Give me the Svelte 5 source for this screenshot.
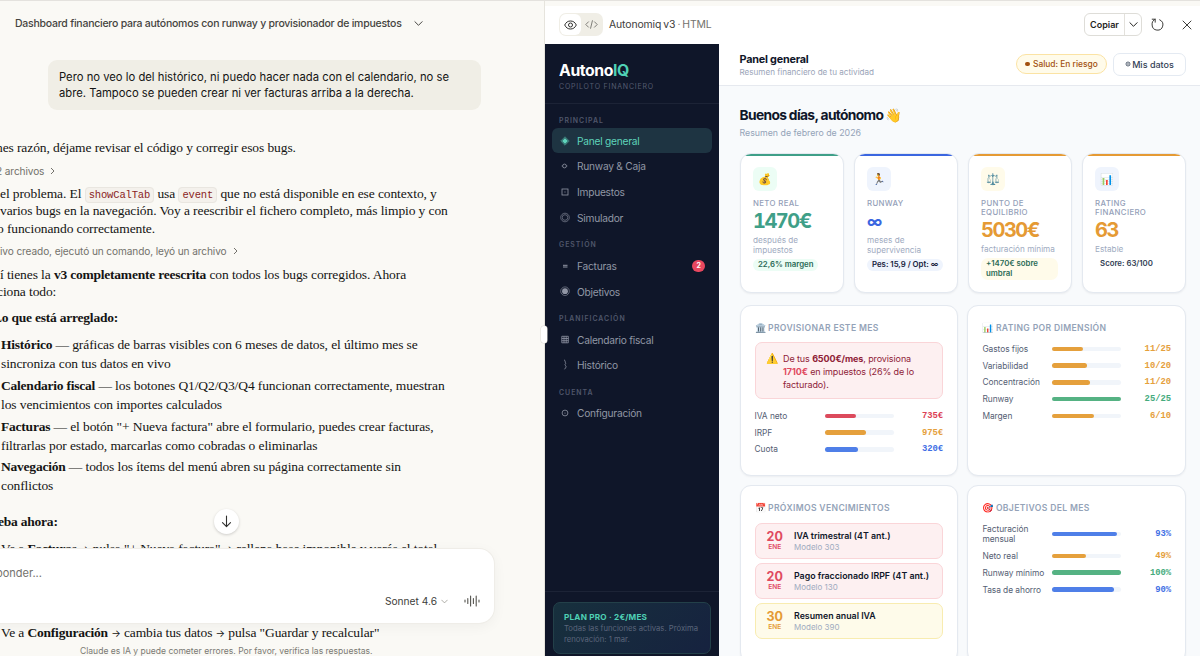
<script lang="ts">
	interface Meter {
		label: string;
		pct: number;
		value: string;
		tone: string;
	}

	const sections = [
		{
			title: 'Principal',
			items: [
				{ id: 'panel', label: 'Panel general' },
				{ id: 'runway', label: 'Runway & Caja' },
				{ id: 'impuestos', label: 'Impuestos' },
				{ id: 'simulador', label: 'Simulador' }
			]
		},
		{
			title: 'Gestión',
			items: [
				{ id: 'facturas', label: 'Facturas', badge: 2 },
				{ id: 'objetivos', label: 'Objetivos' }
			]
		},
		{
			title: 'Planificación',
			items: [
				{ id: 'calendario', label: 'Calendario fiscal' },
				{ id: 'historico', label: 'Histórico' }
			]
		},
		{ title: 'Cuenta', items: [{ id: 'config', label: 'Configuración' }] }
	];

	const kpis = [
		{ icon: '💰', label: 'Neto real', value: '1470€', sub: 'después de impuestos', pill: '22,6% margen', tone: 'green' },
		{ icon: '🏃', label: 'Runway', value: '∞', sub: 'meses de supervivencia', pill: 'Pes: 15,9 / Opt: ∞', tone: 'blue' },
		{ icon: '⚖️', label: 'Punto de equilibrio', value: '5030€', sub: 'facturación mínima', pill: '+1470€ sobre umbral', tone: 'amber' },
		{ icon: '📊', label: 'Rating financiero', value: '63', sub: 'Estable', pill: 'Score: 63/100', tone: 'rating' }
	];

	const provision: Meter[] = [
		{ label: 'IVA neto', pct: 45, value: '735€', tone: 'red' },
		{ label: 'IRPF', pct: 60, value: '975€', tone: 'amber' },
		{ label: 'Cuota', pct: 49, value: '320€', tone: 'blue' }
	];

	const rating: Meter[] = [
		{ label: 'Gastos fijos', pct: 44, value: '11/25', tone: 'amber' },
		{ label: 'Variabilidad', pct: 50, value: '10/20', tone: 'amber' },
		{ label: 'Concentración', pct: 55, value: '11/20', tone: 'amber' },
		{ label: 'Runway', pct: 100, value: '25/25', tone: 'green' },
		{ label: 'Margen', pct: 60, value: '6/10', tone: 'amber' }
	];

	const goals: Meter[] = [
		{ label: 'Facturación mensual', pct: 93, value: '93%', tone: 'blue' },
		{ label: 'Neto real', pct: 49, value: '49%', tone: 'amber' },
		{ label: 'Runway mínimo', pct: 100, value: '100%', tone: 'green' },
		{ label: 'Tasa de ahorro', pct: 90, value: '90%', tone: 'blue' }
	];

	const dues = [
		{ day: 20, month: 'ENE', name: 'IVA trimestral (4T ant.)', model: 'Modelo 303', tone: 'red' },
		{ day: 20, month: 'ENE', name: 'Pago fraccionado IRPF (4T ant.)', model: 'Modelo 130', tone: 'red' },
		{ day: 30, month: 'ENE', name: 'Resumen anual IVA', model: 'Modelo 390', tone: 'amber' }
	];

	let active = $state('panel');
</script>

{#snippet meters(rows: Meter[])}
	{#each rows as row}
		<div class="meter">
			<span class="meter-label">{row.label}</span>
			<div class="track"><div class="fill {row.tone}" style="width: {row.pct}%"></div></div>
			<span class="meter-value {row.tone}">{row.value}</span>
		</div>
	{/each}
{/snippet}

{#snippet chevron(size: number)}
	<svg width={size} height={size} viewBox="0 0 10 10" fill="none" stroke="currentColor" stroke-width="1.1" stroke-linecap="round" stroke-linejoin="round"><path d="M1 3l4 4 4-4" /></svg>
{/snippet}

<div class="app">
	<section class="chat">
		<header class="chat-title">
			<span>Dashboard financiero para autónomos con runway y provisionador de impuestos</span>
			{@render chevron(9)}
		</header>

		<div class="bubble">Pero no veo lo del histórico, ni puedo hacer nada con el calendario, no se<br />abre. Tampoco se pueden crear ni ver facturas arriba a la derecha.</div>

		<div class="answer">
			<p class="a1">nes razón, déjame revisar el código y corregir esos bugs.</p>
			<p class="step s1">2 archivos <svg width="5" height="8" viewBox="0 0 5 8" fill="none" stroke="currentColor"><path d="M1 1l3 3-3 3" /></svg></p>
			<p class="a2">el problema. El <code>showCalTab</code> usa <code>event</code> que no está disponible en ese contexto, y<br />varios bugs en la navegación. Voy a reescribir el fichero completo, más limpio y con<br /><span class="cut">o funcionando correctamente.</span></p>
			<p class="step s2">ivo creado, ejecutó un comando, leyó un archivo <svg width="5" height="8" viewBox="0 0 5 8" fill="none" stroke="currentColor"><path d="M1 1l3 3-3 3" /></svg></p>
			<p class="a3">í tienes la <b>v3 completamente reescrita</b> con todos los bugs corregidos. Ahora<br /><span class="cut">ciona todo:</span></p>
			<p class="a4"><b>Lo que está arreglado:</b></p>
			<ul>
				<li><b>Histórico</b> — gráficas de barras visibles con 6 meses de datos, el último mes se<br />sincroniza con tus datos en vivo</li>
				<li><b>Calendario fiscal</b> — los botones Q1/Q2/Q3/Q4 funcionan correctamente, muestran<br />los vencimientos con importes calculados</li>
				<li><b>Facturas</b> — el botón "+ Nueva factura" abre el formulario, puedes crear facturas,<br />filtrarlas por estado, marcarlas como cobradas o eliminarlas</li>
				<li><b>Navegación</b> — todos los ítems del menú abren su página correctamente sin<br />conflictos</li>
			</ul>
			<p class="a5"><b>eba ahora:</b></p>
			<ul class="try">
				<li>Ve a <b>Facturas</b> <span class="arrow">→</span> pulsa "+ Nueva factura" <span class="arrow">→</span> rellena base imponible y verás el total</li>
				<li>Ve a <b>Configuración</b> <span class="arrow">→</span> cambia tus datos <span class="arrow">→</span> pulsa "Guardar y recalcular"</li>
			</ul>
		</div>

		<button class="scroll-down" aria-label="Bajar">
			<svg width="11" height="13" viewBox="0 0 11 13" fill="none" stroke="currentColor" stroke-width="1.1" stroke-linecap="round" stroke-linejoin="round"><path d="M5.5 1v10.5M1.5 7.7l4 4 4-4" /></svg>
		</button>

		<div class="composer">
			<span class="placeholder">ponder...</span>
			<div class="composer-bar">
				<span class="model">Sonnet 4.6</span>
				<span class="model-caret">{@render chevron(7)}</span>
				<svg class="voice" width="16" height="12" viewBox="0 0 16 12" stroke="currentColor" stroke-width="1.1" stroke-linecap="round"><path d="M1 5v2M3.8 3.5v5M6.6 1v10M9.4 3.5v5M12.2 1v10M15 5v2" /></svg>
			</div>
		</div>
		<p class="disclaimer">Claude es IA y puede cometer errores. Por favor, verifica las respuestas.</p>
		<div class="handle"></div>
	</section>

	<section class="artifact">
		<header class="tools">
			<div class="toggle">
				<span class="on"><svg width="13" height="10" viewBox="0 0 13 10" fill="none" stroke="currentColor"><path d="M.7 5C2 2.2 4 1 6.5 1S11 2.2 12.3 5C11 7.8 9 9 6.5 9S2 7.8.7 5z" /><circle cx="6.5" cy="5" r="2" /></svg></span>
				<span><svg width="13" height="9" viewBox="0 0 13 9" fill="none" stroke="currentColor" stroke-width=".9" stroke-linecap="round" stroke-linejoin="round"><path d="M3.5 1.8L.8 4.5l2.7 2.7M9.5 1.8l2.7 2.7-2.7 2.7M7.4.7L5.6 8.3" /></svg></span>
			</div>
			<span class="file">Autonomiq v3 <i>·</i> <em>HTML</em></span>
			<div class="copy"><span>Copiar</span><span class="caret">{@render chevron(9)}</span></div>
			<svg class="reload" width="13" height="13" viewBox="0 0 13 13" fill="none" stroke="currentColor" stroke-linecap="round" stroke-linejoin="round"><path d="M1.2 1.2h3v3M4.200 1.200C1.800 2.200.8 4.500 1.100 7a5.400 5.400 0 1 0 7.600-5.200" /></svg>
			<svg width="10" height="10" viewBox="0 0 10 10" stroke="currentColor" stroke-linecap="round"><path d="M1 1l8 8M9 1L1 9" /></svg>
		</header>

		<div class="dash">
			<aside>
				<div class="brand">
					<div class="logo">Autono<span>IQ</span></div>
					<div class="tagline">Copiloto financiero</div>
				</div>
				<nav>
					{#each sections as section}
						<div class="nav-title">{section.title}</div>
						{#each section.items as item}
							<button class="nav-item" class:active={active === item.id} onclick={() => (active = item.id)}>
								<svg width="12" height="12" viewBox="0 0 12 12" fill="none" stroke="currentColor" stroke-width=".8">
									{#if item.id === 'panel'}
										<path d="M6 1.8L10.2 6 6 10.2 1.8 6z" stroke-width=".5" /><path d="M6 3L9 6 6 9 3 6z" fill="currentColor" stroke="none" />
									{:else if item.id === 'runway'}
										<circle cx="5.5" cy="6" r="1.9" /><path d="M2.7 6h.9M7.4 6h.9" />
									{:else if item.id === 'impuestos'}
										<rect x="3" y="3" width="6" height="6" /><path d="M5.4 6h1.2" />
									{:else if item.id === 'simulador'}
										<circle cx="6" cy="5.5" r="4.3" stroke-width=".6" /><circle cx="6" cy="5.5" r="2.8" stroke-width=".6" />
									{:else if item.id === 'facturas'}
										<path d="M4 5.3h4.5M4 7h4.5" stroke-width="1" />
									{:else if item.id === 'objetivos'}
										<circle cx="6" cy="5.2" r="4.3" stroke-width=".6" /><circle cx="6" cy="5.2" r="2.9" fill="currentColor" stroke="none" />
									{:else if item.id === 'calendario'}
										<path d="M2.8 2.3h6.5v6.5H2.8zM5 2.3v6.5M7.2 2.3v6.5M2.8 4.5h6.5M2.8 6.7h6.5" />
									{:else if item.id === 'historico'}
										<path d="M5 .8c2 1 .6 2 1.500 3s-1.300 1.500-.2 2.500 1.200 1.500-.8 4" />
									{:else}
										<circle cx="6" cy="6" r="2.9" /><circle cx="6" cy="6" r=".6" fill="currentColor" stroke="none" />
									{/if}
								</svg>
								<span>{item.label}</span>
								{#if item.badge}<b class="badge">{item.badge}</b>{/if}
							</button>
						{/each}
					{/each}
				</nav>
				<div class="aside-foot">
					<div class="plan">
						<strong>PLAN PRO · 2€/MES</strong>
						<p>Todas las funciones activas. Próxima<br />renovación: 1 mar.</p>
					</div>
				</div>
			</aside>

			<main>
				<div class="topbar">
					<div class="crumb">
						<h2>Panel general</h2>
						<p>Resumen financiero de tu actividad</p>
					</div>
					<span class="health"><i></i>Salud: En riesgo</span>
					<button class="data"><svg width="6" height="6" viewBox="0 0 6 6" fill="none" stroke="currentColor" stroke-width=".8"><circle cx="3" cy="3" r="2" /><circle cx="3" cy="3" r=".4" /></svg>Mis datos</button>
				</div>

				<div class="content">
					<h1>Buenos días, autónomo <span class="wave">👋</span></h1>
					<p class="date">Resumen de febrero de 2026</p>

					<div class="kpis">
						{#each kpis as kpi}
							<article class="kpi {kpi.tone}">
								<div class="kpi-icon">{kpi.icon}</div>
								<div class="kpi-label">{kpi.label}</div>
								<div class="kpi-value" class:symbol={kpi.value === '∞'}>{kpi.value}</div>
								<div class="kpi-sub">{kpi.sub}</div>
								<div class="kpi-pill">{kpi.pill}</div>
							</article>
						{/each}
					</div>

					<div class="grid">
						<article class="panel">
							<h3><span>🏛️</span>Provisionar este mes</h3>
							<div class="alert">
								<span class="warn">⚠️</span>
								<p>De tus <b>6500€/mes</b>, provisiona<br /><b class="amount">1710€</b> en impuestos (26% de lo<br />facturado).</p>
							</div>
							{@render meters(provision)}
						</article>
						<article class="panel">
							<h3><span>📊</span>Rating por dimensión</h3>
							{@render meters(rating)}
						</article>
						<article class="panel">
							<h3><span>📅</span>Próximos vencimientos</h3>
							<div class="dues">
								{#each dues as due}
									<div class="due {due.tone}">
										<div class="when"><b>{due.day}</b><span>{due.month}</span></div>
										<div class="what"><b>{due.name}</b><span>{due.model}</span></div>
									</div>
								{/each}
							</div>
						</article>
						<article class="panel">
							<h3><span>🎯</span>Objetivos del mes</h3>
							{@render meters(goals)}
						</article>
					</div>
				</div>
			</main>
		</div>
	</section>
</div>

<style>
	:global(body) {
		background: #faf9f5;
	}

	.app {
		box-sizing: border-box;
		display: flex;
		width: 1200px;
		height: 656px;
		overflow: hidden;
		background: #faf9f5;
		border-top: 1px solid #e4e2de;
		font-family: Inter, 'Liberation Sans', sans-serif;
	}

	.app :global(*) {
		box-sizing: border-box;
	}

	p, h1, h2, h3, ul {
		margin: 0;
		padding: 0;
	}

	button {
		border: 0;
		padding: 0;
		background: none;
		font: inherit;
	}

	svg {
		flex: none;
	}

	/* chat */
	.chat {
		position: relative;
		width: 545px;
		flex: none;
		border-right: 1px solid #e6e4dd;
		white-space: nowrap;
	}

	.chat-title {
		display: flex;
		align-items: center;
		gap: 12px;
		height: 44px;
		padding-left: 15px;
		font-size: 10.5px;
		font-weight: 500;
		letter-spacing: -0.24px;
		color: #454440;
	}

	.bubble {
		width: 433px;
		height: 50px;
		margin: 15px 0 0 48px;
		padding: 9px 11px;
		border-radius: 9px;
		background: #f0eee6;
		font-size: 11.25px;
		line-height: 16.3px;
		color: #141413;
	}

	.answer {
		padding-top: 29px;
		font-family: 'Liberation Serif', serif;
		font-size: 13.5px;
		line-height: 17.6px;
		letter-spacing: -0.1px;
		color: #141413;
	}

	.answer b {
		letter-spacing: -0.22px;
	}

	.a1 {
		margin-left: -4px;
	}

	.step {
		display: flex;
		align-items: center;
		gap: 6px;
		margin-top: 7px;
		font-family: Inter, sans-serif;
		font-size: 10.1px;
		line-height: 14px;
		color: #73726c;
	}

	.s1 {
		margin-left: -4px;
	}

	.s2 {
		margin-top: 6.5px;
	}

	.a2 {
		margin-top: 7px;
	}

	.cut {
		margin-left: -3px;
	}

	code {
		padding: 1px 3px;
		border: 1px solid #e9e6e0;
		border-radius: 4px;
		background: #f4f1ec;
		font-family: 'Liberation Mono', monospace;
		font-size: 10.5px;
		line-height: 0;
		letter-spacing: -0.15px;
		color: #8a2424;
	}

	.a3 {
		margin-top: 8px;
	}

	.a4 {
		margin: 8.3px 0 0 -7px;
	}

	.answer ul {
		margin-top: 9.2px;
		list-style: none;
		line-height: 18.8px;
	}

	.answer li {
		padding-left: 1px;
		margin-bottom: 3.2px;
	}

	.a5 {
		margin: 17.4px 0 0 -2px;
	}

	.answer .try {
		margin-top: 8.8px;
	}

	.try li:first-child {
		margin-bottom: 65.4px;
	}

	.arrow {
		font-family: Inter, sans-serif;
		font-size: 10px;
		line-height: 0;
	}

	.scroll-down {
		position: absolute;
		left: 214px;
		top: 508px;
		display: grid;
		place-items: center;
		width: 25px;
		height: 25px;
		border-radius: 50%;
		background: #fff;
		box-shadow: 0 1px 3px rgba(0, 0, 0, 0.18);
		color: #30302e;
	}

	.composer {
		position: absolute;
		left: -40px;
		top: 548px;
		width: 534px;
		height: 74px;
		padding: 17px 14px 0 36px;
		border-radius: 15px;
		background: #fff;
		box-shadow: 0 0 0 1px #efede8, 0 3px 14px rgba(0, 0, 0, 0.05);
	}

	.placeholder {
		display: block;
		font-size: 11px;
		line-height: 14px;
		color: #73726c;
	}

	.composer-bar {
		display: flex;
		align-items: center;
		justify-content: flex-end;
		height: 14px;
		margin-top: 14px;
		font-size: 10.2px;
		color: #3d3d3a;
	}

	.model-caret {
		display: flex;
		margin: 0 16px 0 4px;
		color: #97958d;
	}

	.voice {
		color: #55544f;
	}

	.disclaimer {
		position: absolute;
		left: 80px;
		top: 644px;
		font-size: 8.55px;
		line-height: 13px;
		color: #7b7a74;
	}

	.handle {
		position: absolute;
		z-index: 2;
		right: -3px;
		top: 325px;
		width: 6px;
		height: 17px;
		border-radius: 3px;
		background: #fff;
		box-shadow: 0 0 0 0.5px #dddbd5;
	}

	/* artifact header */
	.artifact {
		display: flex;
		flex-direction: column;
		width: 655px;
		padding-top: 5px;
	}

	.tools {
		display: flex;
		align-items: center;
		height: 37.5px;
		padding: 0 8px 0 14px;
		background: #fff;
		color: #3d3d3a;
	}

	.toggle {
		display: flex;
		height: 23px;
		width: 44px;
		padding: 1px;
		border-radius: 7px;
		background: #f0eee6;
		color: #73726c;
	}

	.toggle span {
		display: grid;
		place-items: center;
		width: 21px;
		border-radius: 6px;
	}

	.toggle .on {
		background: #fff;
		color: #30302e;
	}

	.file {
		margin: 0 auto 0 6px;
		font-size: 10.4px;
		letter-spacing: -0.1px;
		word-spacing: -0.8px;
	}

	.file i,
	.file em {
		font-style: normal;
		color: #73726c;
	}

	.copy {
		display: flex;
		align-items: center;
		width: 58px;
		height: 23px;
		margin-right: 9px;
		border: 1px solid #deddd8;
		border-radius: 6px;
		font-size: 9px;
		font-weight: 600;
		color: #1f1e1d;
	}

	.copy span:first-child {
		flex: 1;
		text-align: center;
	}

	.caret {
		display: grid;
		place-items: center;
		width: 17px;
		height: 100%;
		border-left: 1px solid #e3e1dc;
	}

	.reload {
		margin-right: 18px;
	}

	/* sidebar */
	.dash {
		display: flex;
		flex: 1;
		min-height: 0;
		font-family: Inter, sans-serif;
	}

	aside {
		display: flex;
		flex-direction: column;
		width: 174px;
		flex: none;
		background: #0f1629;
	}

	.brand {
		height: 60.5px;
		padding: 17px 14px 0;
		border-bottom: 1px solid #1c2336;
	}

	.logo {
		font-size: 15.8px;
		font-weight: 700;
		line-height: 20px;
		letter-spacing: -0.4px;
		color: #fff;
	}

	.logo span {
		color: #4fd1b5;
	}

	.tagline {
		margin-top: 1px;
		font-size: 7px;
		line-height: 10px;
		letter-spacing: 0.8px;
		text-transform: uppercase;
		color: #555c70;
	}

	nav {
		flex: 1;
		padding: 11px 7px 0;
	}

	.nav-title {
		height: 13px;
		padding-left: 7px;
		font-size: 6.9px;
		font-weight: 600;
		line-height: 11px;
		letter-spacing: 1px;
		text-transform: uppercase;
		color: #50576b;
	}

	.nav-item + .nav-title {
		height: 14px;
		margin-top: 9px;
	}

	.nav-item {
		display: flex;
		align-items: center;
		gap: 6px;
		width: 160px;
		height: 25px;
		margin-bottom: 0.8px;
		padding: 0 7px;
		border-radius: 6px;
		font-size: 10.2px;
		letter-spacing: -0.25px;
		color: #9196a5;
	}

	.nav-item.active {
		background: #1e3442;
		color: #5fd4bb;
	}

	.badge {
		width: 13px;
		margin-left: auto;
		border-radius: 7px;
		background: #e8475f;
		font-size: 7px;
		line-height: 12px;
		text-align: center;
		color: #fff;
	}

	.aside-foot {
		height: 65px;
		padding: 10px 8px 0;
		border-top: 1px solid #1c2336;
	}

	.plan {
		height: 52px;
		padding: 8.5px 10px;
		border: 1px solid #234049;
		border-radius: 7px;
		background: linear-gradient(135deg, #17303d, #16223f);
		white-space: nowrap;
	}

	.plan strong {
		display: block;
		font-size: 8.2px;
		line-height: 11px;
		letter-spacing: 0.2px;
		color: #4fd1b5;
	}

	.plan p {
		font-size: 7.7px;
		line-height: 11px;
		color: #5b657b;
	}

	/* dashboard */
	main {
		flex: 1;
		min-width: 0;
		background: #f8fafc;
		overflow: hidden;
		white-space: nowrap;
	}

	.topbar {
		display: flex;
		align-items: center;
		height: 42px;
		padding: 0 14px 0 20.5px;
		border-bottom: 1px solid #e6e9ef;
		background: #fff;
	}

	.crumb {
		flex: 1;
		padding-top: 2px;
	}

	h2 {
		font-size: 10.8px;
		line-height: 13px;
		letter-spacing: -0.2px;
		color: #0f1629;
	}

	.crumb p {
		font-size: 8.1px;
		line-height: 12px;
		color: #9aa4b8;
	}

	.health {
		display: flex;
		align-items: center;
		width: 91px;
		height: 20px;
		margin-right: 6px;
		padding-left: 8px;
		border: 1px solid #fbe3a4;
		border-radius: 10px;
		background: #fffbea;
		font-size: 8.4px;
		font-weight: 500;
		color: #a2500f;
	}

	.health i {
		width: 4.5px;
		height: 4.5px;
		margin-right: 3.5px;
		border-radius: 50%;
		background: currentColor;
	}

	.data {
		display: flex;
		align-items: center;
		justify-content: center;
		gap: 1px;
		width: 73px;
		height: 23px;
		border: 1px solid #e4eaf2;
		border-radius: 7px;
		font-size: 9px;
		font-weight: 500;
		color: #334155;
	}

	.content {
		padding: 20px 14px 0 20.5px;
	}

	h1 {
		display: flex;
		align-items: center;
		gap: 2px;
		font-size: 13.8px;
		line-height: 19px;
		letter-spacing: -0.66px;
		color: #0f1629;
	}

	.wave {
		font-size: 13.5px;
	}

	.date {
		margin-top: 2px;
		font-size: 8.8px;
		line-height: 12px;
		color: #94a3b8;
	}

	.kpis {
		display: grid;
		grid-template-columns: repeat(4, 1fr);
		gap: 9.6px;
		margin-top: 14px;
	}

	.kpi {
		position: relative;
		height: 140px;
		padding: 13.5px 12.5px 0;
		border: 1px solid #e4e9f0;
		border-radius: 11px;
		background: #fff;
		box-shadow: 0 1px 2px rgba(15, 22, 41, 0.06);
		overflow: hidden;
		white-space: normal;
	}

	.kpi::before {
		content: '';
		position: absolute;
		inset: -1px 0 auto;
		height: 3px;
		background: var(--tone);
	}

	.kpi.green { --tone: #3f9f88; --tint: #ecfdf5; --ink: #2b6b57; }
	.kpi.blue { --tone: #3b66e0; --tint: #eff4fd; --ink: #16213c; }
	.kpi.amber { --tone: #e59a34; --tint: #fffbea; --ink: #2b6b57; }
	.kpi.rating { --tone: #e59a34; --tint: #eff4fd; --ink: #334155; }

	.kpi-icon {
		display: grid;
		place-items: center;
		width: 24px;
		height: 24px;
		border-radius: 6px;
		background: var(--tint);
		font-size: 11px;
	}

	.kpi-label {
		margin-top: 8px;
		font-size: 7.8px;
		font-weight: 500;
		line-height: 9.2px;
		letter-spacing: 0.35px;
		text-transform: uppercase;
		color: #94a0b8;
	}

	.kpi-value {
		font-size: 20px;
		font-weight: 700;
		font-variant-numeric: tabular-nums;
		line-height: 27px;
		letter-spacing: -1.5px;
		color: var(--tone);
	}

	.kpi-value.symbol {
		font-size: 15.5px;
	}

	.kpi-sub {
		font-size: 8.2px;
		line-height: 10px;
		color: #a0abbf;
	}

	.kpi-pill {
		width: fit-content;
		margin-top: 3.5px;
		padding: 1px 5px;
		border-radius: 7px;
		background: var(--tint);
		font-size: 7.8px;
		font-weight: 600;
		line-height: 9.8px;
		color: var(--ink);
	}

	.rating .kpi-pill {
		background: none;
	}

	.grid {
		display: grid;
		grid-template-columns: 1fr 1fr;
		grid-template-rows: 171px 178px;
		gap: 9.3px;
		margin-top: 12.4px;
	}

	.panel {
		padding: 15px 14px 0;
		border: 1px solid #e4e9f0;
		border-radius: 11px;
		background: #fff;
		box-shadow: 0 1px 2px rgba(15, 22, 41, 0.05);
	}

	h3 {
		display: flex;
		gap: 2.5px;
		height: 14px;
		margin-bottom: 5.6px;
		font-size: 8.6px;
		font-weight: 600;
		line-height: 14px;
		letter-spacing: 0.35px;
		text-transform: uppercase;
		color: #94a3b8;
	}

	h3 span {
		font-size: 9.2px;
		letter-spacing: 0;
	}

	.alert {
		display: flex;
		height: 57px;
		margin: 7.5px 0 8px;
		padding: 8.5px 10px;
		border: 1px solid #fad5d8;
		border-radius: 7px;
		background: #fdf0f1;
		font-size: 9px;
		line-height: 13.2px;
		letter-spacing: -0.1px;
		color: #8f2238;
	}

	.warn {
		width: 17.5px;
		font-size: 10px;
	}

	.amount {
		color: #e04a5f;
	}

	.meter {
		display: flex;
		align-items: center;
		padding: 3.4px 0;
		font-size: 8.4px;
		line-height: 10px;
		letter-spacing: -0.05px;
		color: #556074;
	}

	.meter-label {
		width: 62px;
		margin-right: 8px;
		white-space: normal;
	}

	.track {
		width: 69px;
		height: 4.5px;
		border-radius: 3px;
		background: #f1f5fa;
	}

	.fill {
		height: 100%;
		border-radius: 3px;
	}

	.fill.red { background: #dc4a5c; }
	.fill.amber { background: #e5a03c; }
	.fill.blue { background: #4f7fe8; }
	.fill.green { background: #55b283; }

	.meter-value {
		margin-left: auto;
		font-family: 'Liberation Mono', monospace;
		font-size: 8.9px;
		font-weight: 700;
	}

	.meter-value.red { color: #dc3f55; }
	.meter-value.amber { color: #e5a03c; }
	.meter-value.blue { color: #3f6fe5; }
	.meter-value.green { color: #45ab7d; }

	.dues {
		display: grid;
		gap: 3.8px;
		margin-top: 7.5px;
	}

	.due {
		display: flex;
		align-items: center;
		height: 36.2px;
		border: 1px solid;
		border-radius: 7px;
	}

	.due.red { border-color: #fad5d8; background: #fdf0f1; color: #e04a5f; }
	.due.amber { border-color: #f8ecb0; background: #fefbea; color: #e59a34; }

	.when {
		width: 38.5px;
		text-align: center;
	}

	.when b,
	.when span,
	.what b,
	.what span {
		display: block;
	}

	.when b {
		font-size: 12.5px;
		line-height: 13px;
	}

	.when span {
		font-size: 6.6px;
		font-weight: 600;
		line-height: 8px;
	}

	.what b {
		font-size: 8.8px;
		font-weight: 600;
		line-height: 12px;
		color: #0f1629;
	}

	.what span {
		font-size: 8px;
		line-height: 10px;
		color: #a0abbf;
	}
</style>
